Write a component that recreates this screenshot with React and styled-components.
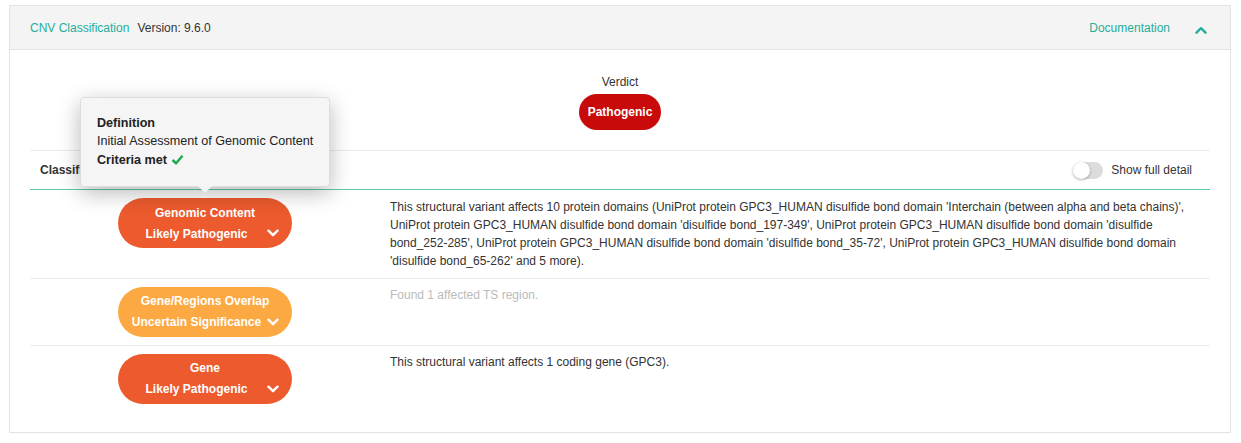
import React from 'react';
import styled, { createGlobalStyle } from 'styled-components';

const GlobalStyle = createGlobalStyle`
  body {
    margin: 0;
    font-family: "Liberation Sans", Arial, sans-serif;
    font-size: 12px;
    color: #333;
    background: #fff;
  }
`;

const Page = styled.div`
  padding: 5px 10px 10px 9px;
`;

const Card = styled.div`
  border: 1px solid #e3e3e3;
  background: #fff;
`;

const Header = styled.div`
  height: 43px;
  display: flex;
  align-items: center;
  padding: 0 23px 0 20px;
  background: #f4f4f4;
  border-bottom: 1px solid #e3e3e3;
`;

const Title = styled.span`
  color: #26ad9c;
`;

const Version = styled.span`
  margin-left: 8px;
  color: #333;
`;

const DocLink = styled.a`
  margin-left: auto;
  color: #26ad9c;
  text-decoration: none;
`;

const Collapse = styled.button`
  margin-left: 25px;
  border: 0;
  background: none;
  padding: 0;
  display: flex;
  margin-top: 6px;
`;

const Body = styled.div`
  padding: 0 20px 20px;
`;

const VerdictBox = styled.div`
  display: flex;
  flex-direction: column;
  align-items: center;
  padding: 25px 0 20px;
  border-bottom: 1px solid #ebebeb;
`;

const VerdictLabel = styled.div`
  margin-bottom: 5px;
  line-height: 14px;
`;

const VerdictPill = styled.div`
  height: 36px;
  padding: 0 9px;
  border-radius: 18px;
  background: #c80a0a;
  color: #fff;
  font-weight: bold;
  display: flex;
  align-items: center;
`;

const TableHead = styled.div`
  height: 38px;
  display: flex;
  align-items: center;
  padding: 0 18px 0 10px;
  border-bottom: 1px solid #5ccba9;
`;

const HeadLabel = styled.span`
  font-weight: bold;
`;

const ToggleWrap = styled.label`
  margin-left: auto;
  display: flex;
  align-items: center;
  gap: 8px;
`;

const Track = styled.span`
  width: 30px;
  height: 17px;
  border-radius: 9px;
  background: #dcdcdc;
  position: relative;
  display: inline-block;
`;

const Knob = styled.span`
  position: absolute;
  left: 0;
  top: 0;
  width: 17px;
  height: 17px;
  border-radius: 50%;
  background: #fff;
  box-shadow: 0 1px 3px rgba(0, 0, 0, 0.3);
`;

const Row = styled.div`
  display: grid;
  grid-template-columns: 350px 1fr;
  border-bottom: ${(p) => (p.$last ? 'none' : '1px solid #ebebeb')};
  padding: 8px 0;
`;

const PillCell = styled.div`
  display: flex;
  justify-content: center;
  align-items: flex-start;
`;

const PillAnchor = styled.div`
  position: relative;
`;

const Pill = styled.div`
  width: 174px;
  height: 50px;
  border-radius: 25px;
  background: ${(p) => p.$color};
  color: #fff;
  font-weight: bold;
  display: flex;
  flex-direction: column;
  justify-content: center;
  box-sizing: border-box;
  gap: 7px;
`;

const PillTitle = styled.div`
  text-align: center;
  line-height: 14px;
`;

const PillStatus = styled.div`
  display: flex;
  align-items: center;
  padding: 0 13px 0 8px;
  line-height: 14px;
`;

const StatusText = styled.span`
  flex: 1;
  text-align: center;
`;

const Description = styled.div`
  padding: 0 10px;
  line-height: 18.3px;
  color: ${(p) => (p.$muted ? '#bbb' : '#333')};
  margin: -0.5px 0 -1px;
`;

const Tooltip = styled.div`
  position: absolute;
  left: 50%;
  bottom: calc(100% + 11px);
  transform: translateX(-50%);
  width: 250px;
  box-sizing: border-box;
  padding: 16px 10px 17px 16px;
  background: #f5f5f5;
  border: 1px solid #dedede;
  border-radius: 4px;
  box-shadow: 0 6px 22px rgba(0, 0, 0, 0.28);
  font-size: 12.6px;
  line-height: 18.5px;
  white-space: nowrap;
  color: #222;
  z-index: 2;

  &::after {
    content: '';
    position: absolute;
    left: 50%;
    bottom: -7px;
    margin-left: -7px;
    border-left: 7px solid transparent;
    border-right: 7px solid transparent;
    border-top: 7px solid #f5f5f5;
  }
`;

const TipStrong = styled.div`
  font-weight: bold;
  display: flex;
  align-items: center;
  gap: 4px;
`;

const Chevron = ({ up, color = '#fff', size = 12 }) => (
  <svg width={size} height={size * 0.7} viewBox="0 0 12 8">
    <polyline
      points={up ? '1.5,6.5 6,2 10.5,6.5' : '1.5,1.5 6,6 10.5,1.5'}
      fill="none"
      stroke={color}
      strokeWidth="2.4"
      strokeLinecap="round"
      strokeLinejoin="round"
    />
  </svg>
);

const Check = () => (
  <svg width="13" height="11" viewBox="0 0 13 11">
    <polyline points="1.5,6 5,9.2 11.5,1.8" fill="none" stroke="#1fa84a" strokeWidth="2.4" />
  </svg>
);

const rows = [
  {
    title: 'Genomic Content',
    status: 'Likely Pathogenic',
    color: '#ec5a2d',
    text: "This structural variant affects 10 protein domains (UniProt protein GPC3_HUMAN disulfide bond domain 'Interchain (between alpha and beta chains)', UniProt protein GPC3_HUMAN disulfide bond domain 'disulfide bond_197-349', UniProt protein GPC3_HUMAN disulfide bond domain 'disulfide bond_252-285', UniProt protein GPC3_HUMAN disulfide bond domain 'disulfide bond_35-72', UniProt protein GPC3_HUMAN disulfide bond domain 'disulfide bond_65-262' and 5 more).",
    tooltip: true,
  },
  {
    title: 'Gene/Regions Overlap',
    status: 'Uncertain Significance',
    color: '#fca943',
    text: 'Found 1 affected TS region.',
    muted: true,
  },
  {
    title: 'Gene',
    status: 'Likely Pathogenic',
    color: '#ec5a2d',
    text: 'This structural variant affects 1 coding gene (GPC3).',
  },
];

export default function App() {
  return (
    <Page>
      <GlobalStyle />
      <Card>
        <Header>
          <Title>CNV Classification</Title>
          <Version>Version: 9.6.0</Version>
          <DocLink href="#">Documentation</DocLink>
          <Collapse>
            <Chevron up color="#26ad9c" size={12} />
          </Collapse>
        </Header>
        <Body>
          <VerdictBox>
            <VerdictLabel>Verdict</VerdictLabel>
            <VerdictPill>Pathogenic</VerdictPill>
          </VerdictBox>
          <TableHead>
            <HeadLabel>Classification</HeadLabel>
            <ToggleWrap>
              <Track>
                <Knob />
              </Track>
              Show full detail
            </ToggleWrap>
          </TableHead>
          {rows.map((r, i) => (
            <Row key={r.title} $last={i === rows.length - 1}>
              <PillCell>
                <PillAnchor>
                  {r.tooltip && (
                    <Tooltip>
                      <TipStrong>Definition</TipStrong>
                      <div>Initial Assessment of Genomic Content</div>
                      <TipStrong>
                        Criteria met <Check />
                      </TipStrong>
                    </Tooltip>
                  )}
                  <Pill $color={r.color}>
                    <PillTitle>{r.title}</PillTitle>
                    <PillStatus>
                      <StatusText>{r.status}</StatusText>
                      <Chevron />
                    </PillStatus>
                  </Pill>
                </PillAnchor>
              </PillCell>
              <Description $muted={r.muted}>{r.text}</Description>
            </Row>
          ))}
        </Body>
      </Card>
    </Page>
  );
}
